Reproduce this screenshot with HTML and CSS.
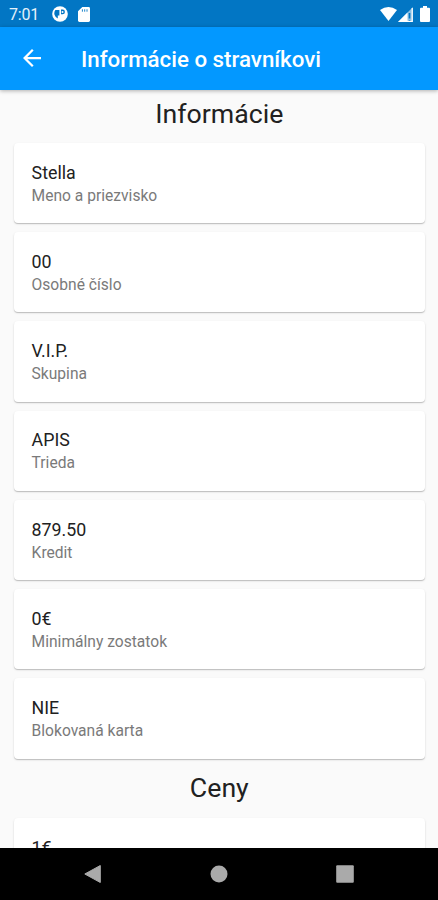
FILE: index.html
```
<!DOCTYPE html>
<html lang="sk">
<head>
    <meta charset="UTF-8">
    <meta name="viewport" content="width=device-width, initial-scale=1.0">
    <title>Informácie o stravníkovi</title>
    <link rel="stylesheet" href="styles.css">
</head>
<body>
    <div class="status-bar">
        <span class="time">7:01</span>
        <svg class="icon-app" width="16" height="16" viewBox="0 0 16 16">
            <circle cx="8" cy="8" r="7.8" fill="#fff"/>
            <path d="M3.4 4H7.4V9.4H5.8V12.4A5.5 5.5 0 0 1 3.4 4z" fill="#0276c4"/>
            <path d="M9 3.6h1.6a2.3 2.3 0 0 1 0 4.6H9z" fill="#0276c4"/>
            <circle cx="10.5" cy="5.9" r="1" fill="#fff"/>
        </svg>
        <svg class="icon-sd" width="12" height="15" viewBox="0 0 12 15">
            <path d="M4.3 0H10.6Q12 0 12 1.4V13.6Q12 15 10.6 15H1.4Q0 15 0 13.6V4.3z" fill="#fff"/>
            <path d="M4.4 2.3v2.4M6.7 2.3v2.4M9 2.3v2.4" stroke="#0276c4" stroke-width="0.9"/>
        </svg>
        <div class="status-right">
            <svg width="17" height="14" viewBox="0 0 17 14">
                <path d="M0 3Q8.5-3 17 3L8.5 14z" fill="#fff"/>
            </svg>
            <svg class="icon-signal" width="15" height="15" viewBox="0 0 15 15">
                <path d="M15 0V15H0z" fill="#fff" opacity="0.55"/>
                <path d="M9.5 5.5V15H0z" fill="#fff"/>
                <path d="M11.5 6v5.5M11.5 13v1.5" stroke="#0276c4" stroke-width="1.6"/>
                <path d="M14.2 1V14.3H9" stroke="#fff" stroke-width="1.2" fill="none"/>
            </svg>
            <svg class="icon-battery" width="10" height="16" viewBox="0 0 10 16">
                <path d="M3 0h4v1.7h2Q10 1.7 10 2.7V15Q10 16 9 16H1Q0 16 0 15V2.7Q0 1.7 1 1.7h2z" fill="#fff"/>
            </svg>
        </div>
    </div>

    <header class="app-bar">
        <svg class="back" width="18" height="18" viewBox="4 4 16 16">
            <path d="M20 11H7.83l5.59-5.59L12 4l-8 8 8 8 1.41-1.41L7.83 13H20v-2z" fill="#fff"/>
        </svg>
        <h1>Informácie o stravníkovi</h1>
    </header>

    <main class="content">
        <h2>Informácie</h2>
        <div class="card">
            <p class="value">Stella</p>
            <p class="name">Meno a priezvisko</p>
        </div>
        <div class="card">
            <p class="value">00</p>
            <p class="name">Osobné číslo</p>
        </div>
        <div class="card">
            <p class="value">V.I.P.</p>
            <p class="name">Skupina</p>
        </div>
        <div class="card">
            <p class="value">APIS</p>
            <p class="name">Trieda</p>
        </div>
        <div class="card">
            <p class="value">879.50</p>
            <p class="name">Kredit</p>
        </div>
        <div class="card">
            <p class="value">0€</p>
            <p class="name">Minimálny zostatok</p>
        </div>
        <div class="card">
            <p class="value">NIE</p>
            <p class="name">Blokovaná karta</p>
        </div>
        <h2>Ceny</h2>
        <div class="card">
            <p class="value">1€</p>
        </div>
    </main>

    <nav class="nav-bar">
        <svg width="18" height="18" viewBox="0 0 18 18">
            <path d="M16.3.5V17.5L.8 9z" fill="#aaa" stroke="#aaa" stroke-linejoin="round"/>
        </svg>
        <svg width="18" height="18" viewBox="0 0 18 18">
            <circle cx="9" cy="9" r="8.5" fill="#aaa"/>
        </svg>
        <svg width="18" height="18" viewBox="0 0 18 18">
            <rect x="0.2" y="0.2" width="17.6" height="17.6" rx="1" fill="#aaa"/>
        </svg>
    </nav>
</body>
</html>
```

FILE: styles.css
```
* {
    box-sizing: border-box;
}
body {
    margin: 0;
    height: 900px;
    display: flex;
    flex-direction: column;
    overflow: hidden;
    background-color: #fafafa;
    font-family: Roboto, "Liberation Sans", sans-serif;
}
h1, h2, p {
    margin: 0;
    font-weight: 400;
}
svg {
    display: block;
    flex: none;
}
.status-bar {
    flex: none;
    height: 27px;
    display: flex;
    align-items: center;
    padding: 1px 8px 0 9px;
    background-color: #0276c4;
    color: #fff;
}
.time {
    width: 43px;
    font-size: 16px;
    letter-spacing: -0.2px;
    color: #e4f1fa;
}
.icon-sd {
    margin-left: 10px;
}
.status-right {
    display: flex;
    align-items: center;
    margin-left: auto;
}
.icon-signal {
    margin-left: 1px;
}
.icon-battery {
    margin-left: 7px;
}
.app-bar {
    flex: none;
    height: 62.5px;
    display: flex;
    align-items: center;
    padding-left: 23px;
    background-color: #0398ff;
    box-shadow: 0 1px 4px rgba(0, 0, 0, 0.3);
    z-index: 1;
}
.app-bar h1 {
    margin-left: 40px;
    padding-top: 2px;
    font-size: 22.3px;
    font-weight: 500;
    line-height: 26px;
    color: #fff;
}
.content {
    flex: 1;
    min-height: 0;
    overflow: hidden;
    padding: 0 13.4px 0 14px;
}
.content h2 {
    padding: 9px 0 13px;
    font-size: 26.7px;
    line-height: 31.4px;
    text-align: center;
    color: #212121;
}
.card {
    height: 80.3px;
    margin-bottom: 8.93px;
    padding: 18.9px 18px 0 17.6px;
    border-radius: 4px;
    background-color: #fff;
    box-shadow: 0 1px 1px rgba(0, 0, 0, 0.2), 0 1px 3px rgba(0, 0, 0, 0.08);
}
/* a section heading closes up to the last card above it */
.card + h2 {
    margin-top: -3px;
}
.value {
    font-size: 17.8px;
    line-height: 22px;
    color: #212121;
}
.name {
    margin-top: 2px;
    font-size: 15.6px;
    line-height: 20px;
    color: #7a7a7a;
}
.nav-bar {
    flex: none;
    height: 52.5px;
    display: flex;
    justify-content: center;
    align-items: center;
    gap: 108px;
    background-color: #000;
}
```
